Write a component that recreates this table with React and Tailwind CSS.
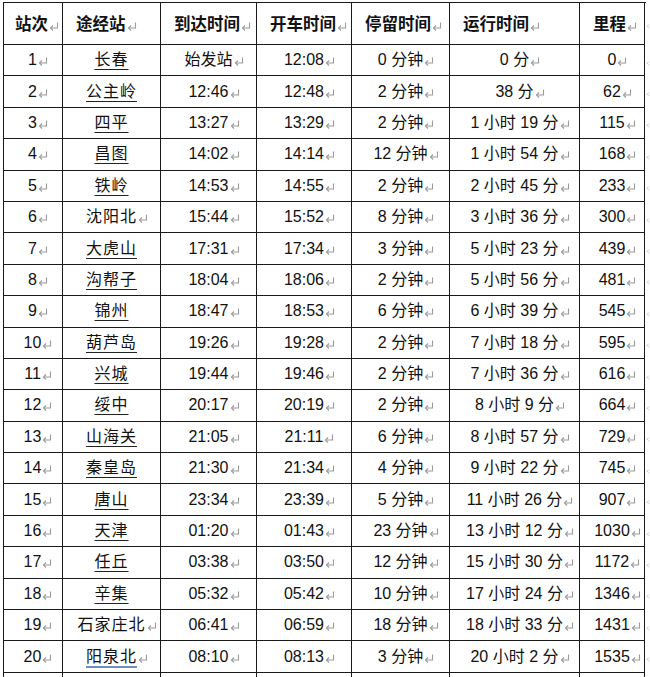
import React from "react";

const rows = [
  ["1", "长春", "始发站", "12:08", "0 分钟", "0 分", "0", 1, 0],
  ["2", "公主岭", "12:46", "12:48", "2 分钟", "38 分", "62", 1, 0],
  ["3", "四平", "13:27", "13:29", "2 分钟", "1 小时 19 分", "115", 1, 0],
  ["4", "昌图", "14:02", "14:14", "12 分钟", "1 小时 54 分", "168", 1, 0],
  ["5", "铁岭", "14:53", "14:55", "2 分钟", "2 小时 45 分", "233", 1, 0],
  ["6", "沈阳北", "15:44", "15:52", "8 分钟", "3 小时 36 分", "300", 0, 1],
  ["7", "大虎山", "17:31", "17:34", "3 分钟", "5 小时 23 分", "439", 1, 0],
  ["8", "沟帮子", "18:04", "18:06", "2 分钟", "5 小时 56 分", "481", 1, 0],
  ["9", "锦州", "18:47", "18:53", "6 分钟", "6 小时 39 分", "545", 1, 0],
  ["10", "葫芦岛", "19:26", "19:28", "2 分钟", "7 小时 18 分", "595", 1, 0],
  ["11", "兴城", "19:44", "19:46", "2 分钟", "7 小时 36 分", "616", 1, 0],
  ["12", "绥中", "20:17", "20:19", "2 分钟", "8 小时 9 分", "664", 1, 0],
  ["13", "山海关", "21:05", "21:11", "6 分钟", "8 小时 57 分", "729", 1, 0],
  ["14", "秦皇岛", "21:30", "21:34", "4 分钟", "9 小时 22 分", "745", 1, 0],
  ["15", "唐山", "23:34", "23:39", "5 分钟", "11 小时 26 分", "907", 1, 0],
  ["16", "天津", "01:20", "01:43", "23 分钟", "13 小时 12 分", "1030", 1, 0],
  ["17", "任丘", "03:38", "03:50", "12 分钟", "15 小时 30 分", "1172", 1, 0],
  ["18", "辛集", "05:32", "05:42", "10 分钟", "17 小时 24 分", "1346", 1, 0],
  ["19", "石家庄北", "06:41", "06:59", "18 分钟", "18 小时 33 分", "1431", 0, 1],
  ["20", "阳泉北", "08:10", "08:13", "3 分钟", "20 小时 2 分", "1535", 2, 1],
];

const headers = ["站次", "途经站", "到达时间", "开车时间", "停留时间", "运行时间", "里程"];

const cols = "grid grid-cols-[60px_98px_96px_95px_98px_130px_65px_5px]";

function Mark({ className = "" }) {
  return (
    <svg width="10" height="9" viewBox="0 0 10 9" className={className} fill="none">
      <path d="M8.5 0.5 V6 H1.5" stroke="#9a9a9a" strokeWidth="1.1" />
      <path d="M4 3.5 L1.5 6 L4 8.5" stroke="#9a9a9a" strokeWidth="1.1" />
    </svg>
  );
}

function Hang({ children, mark = true, className = "" }) {
  return (
    <span className={"relative inline-block leading-[18px] " + className}>
      {children}
      {mark && <Mark className="absolute left-full bottom-[3px] ml-[1px]" />}
    </span>
  );
}

function EdgeMark() {
  return (
    <div className="flex items-center overflow-hidden">
      <svg width="5" height="9" viewBox="0 0 5 9" fill="none" className="ml-[1px] mt-[3px]">
        <path d="M3.5 3.5 L1.5 5.5 L3.5 7.5" stroke="#b0b0b0" strokeWidth="1" />
      </svg>
    </div>
  );
}

const cell = "border-r border-b border-[#1a1a1a] flex items-center justify-center";

export default function App() {
  return (
    <div className="w-[650px] h-[677px] overflow-hidden bg-white pt-[2px] pl-[3px] text-[#111] font-['Liberation_Sans','Noto_Sans_CJK_SC',sans-serif] text-[16px]">
      <div className="border-t border-[#1a1a1a] w-[643px] relative">
        <div className="absolute left-0 top-0 bottom-0 border-l border-[#1a1a1a]" />
        <div className={cols + " h-[42px]"}>
          {headers.map((h, i) => (
            <div
              key={h}
              className={
                "border-r border-b border-[#1a1a1a] flex items-center font-bold text-[16.5px] " +
                (i === 0 ? "pl-[12px]" : "pl-[13px]")
              }
            >
              <span className="leading-[18px]">{h}</span>
              <Mark className="ml-[1px] mt-[5px]" />
            </div>
          ))}
          <EdgeMark />
        </div>
        {rows.map((r) => (
          <div key={r[0]} className={cols + " h-[31.4px]"}>
            <div className={cell}>
              <Hang>{r[0]}</Hang>
            </div>
            <div className={cell}>
              <Hang
                mark={r[8] === 1}
                className={
                  "tracking-[1px] " +
                  (r[7] === 1
                    ? "underline underline-offset-[4px] decoration-[1px] decoration-[#222]"
                    : r[7] === 2
                    ? "underline underline-offset-[4px] decoration-[2px] decoration-[#6f8fc0]"
                    : "")
                }
              >
                {r[1]}
              </Hang>
            </div>
            <div className={cell}>
              <Hang>{r[2]}</Hang>
            </div>
            <div className={cell}>
              <Hang>{r[3]}</Hang>
            </div>
            <div className={cell}>
              <Hang>{r[4]}</Hang>
            </div>
            <div className={cell}>
              <Hang>{r[5]}</Hang>
            </div>
            <div className={cell}>
              <Hang>{r[6]}</Hang>
            </div>
            <EdgeMark />
          </div>
        ))}
        <div className={cols + " h-[31.4px]"}>
          {headers.map((h) => (
            <div key={h} className="border-r border-[#1a1a1a]" />
          ))}
          <div />
        </div>
      </div>
    </div>
  );
}
